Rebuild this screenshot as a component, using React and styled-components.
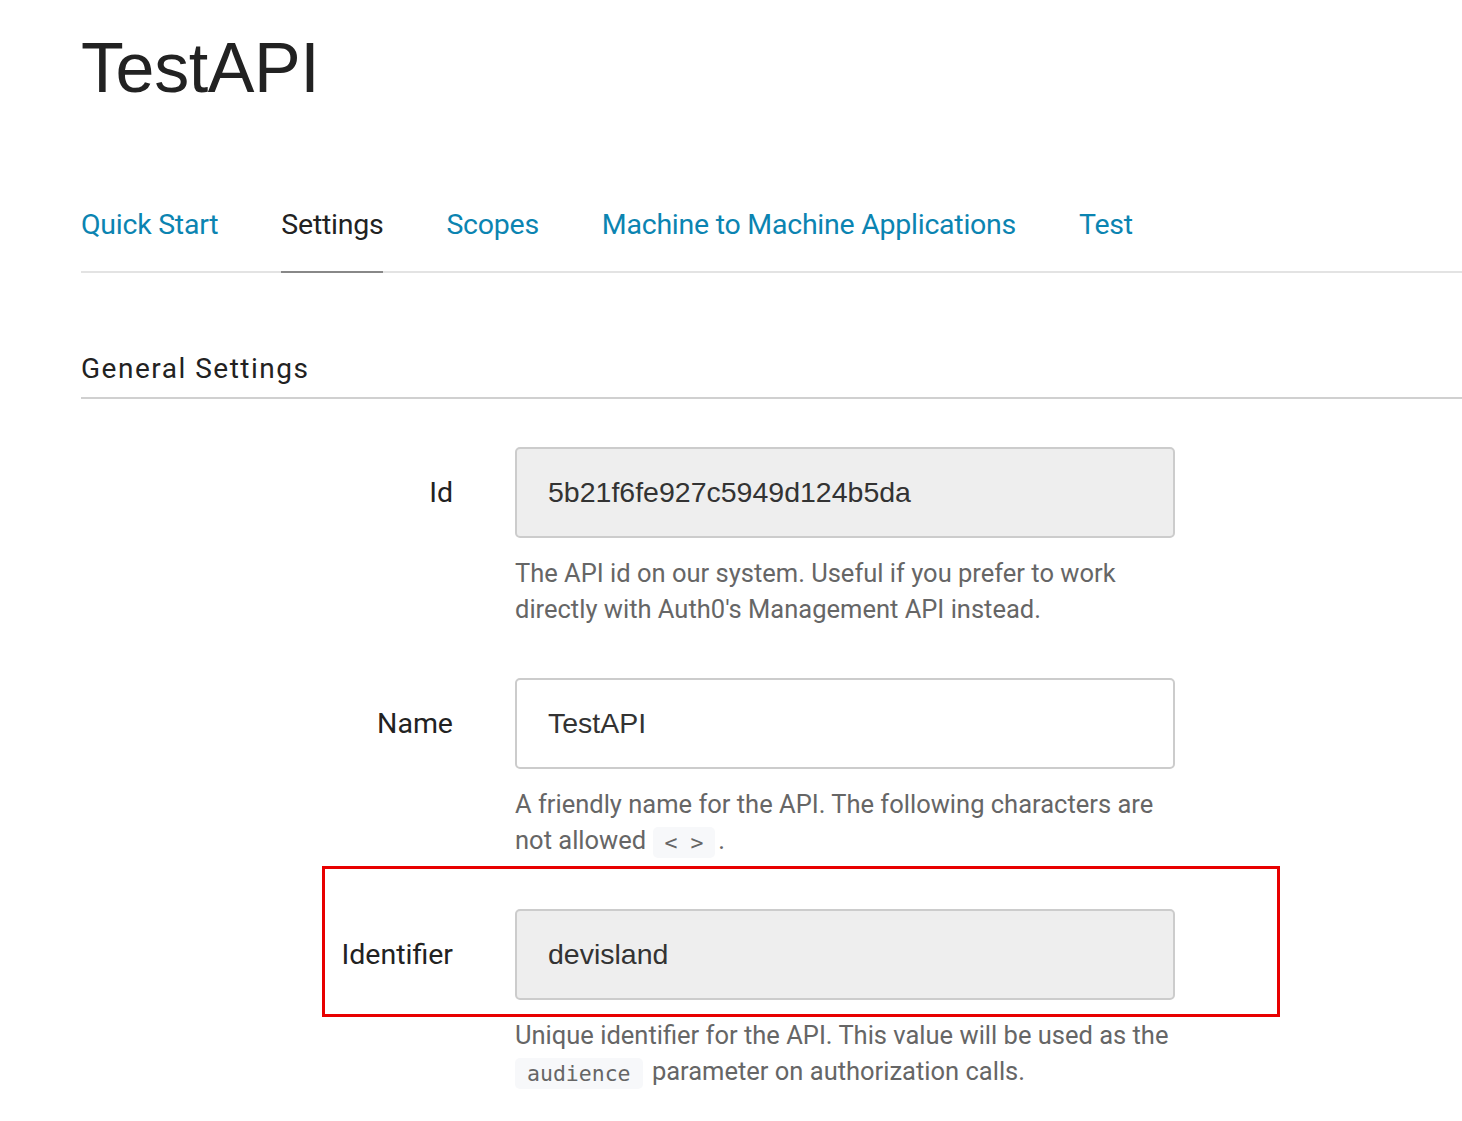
import React from 'react';
import styled, { createGlobalStyle } from 'styled-components';

const GlobalStyle = createGlobalStyle`
  body {
    margin: 0;
    background: #fff;
    font-family: Roboto, "Noto Sans", sans-serif;
  }
`;

const tabs = [
  { label: 'Quick Start' },
  { label: 'Settings', active: true },
  { label: 'Scopes' },
  { label: 'Machine to Machine Applications' },
  { label: 'Test' },
];

const App = () => {
  return (
    <>
      <GlobalStyle />
      <Page>
        <Title>TestAPI</Title>

        <Tabs>
          {tabs.map((t) => (
            <Tab key={t.label} $active={t.active}>
              {t.label}
            </Tab>
          ))}
        </Tabs>

        <SectionTitle>General Settings</SectionTitle>

        <Form>
          <Row>
            <Label>Id</Label>
            <Field>
              <Input $readOnly>5b21f6fe927c5949d124b5da</Input>
              <Help>
                The API id on our system. Useful if you prefer to work
                <br />
                directly with Auth0's Management API instead.
              </Help>
            </Field>
          </Row>

          <Row>
            <Label>Name</Label>
            <Field>
              <Input>TestAPI</Input>
              <Help>
                A friendly name for the API. The following characters are
                <br />
                not allowed <Code>&lt; &gt;</Code>.
              </Help>
            </Field>
          </Row>

          <Row>
            <Highlight />
            <Label>Identifier</Label>
            <Field>
              <Input $readOnly>devisland</Input>
              <Help>
                Unique identifier for the API. This value will be used as the
                <br />
                <Code>audience</Code> parameter on authorization calls.
              </Help>
            </Field>
          </Row>
        </Form>
      </Page>
    </>
  );
};

const Page = styled.div`
  padding: 33px 0 40px 81px;
`;

const Title = styled.h1`
  margin: 0;
  font-family: "Liberation Sans", Arial, sans-serif;
  font-weight: 400;
  font-size: 70px;
  line-height: 70px;
  letter-spacing: -0.4px;
  color: #222;
`;

const Tabs = styled.nav`
  display: flex;
  gap: 63px;
  margin-top: 108px;
  border-bottom: 2px solid #e3e3e3;
`;

const Tab = styled.a`
  display: block;
  padding-bottom: 32px;
  margin-bottom: -2px;
  font-size: 28.5px;
  line-height: 28px;
  letter-spacing: -0.25px;
  color: ${(p) => (p.$active ? '#222' : '#0b84b1')};
  border-bottom: 2px solid ${(p) => (p.$active ? '#888' : 'transparent')};
  cursor: pointer;
  white-space: nowrap;
`;

const SectionTitle = styled.h2`
  margin: 81px 0 0;
  padding-bottom: 13px;
  font-size: 28px;
  line-height: 30px;
  font-weight: 400;
  letter-spacing: 1.5px;
  color: #222;
  border-bottom: 2px solid #d0d0d0;
`;

const Form = styled.div`
  display: flex;
  flex-direction: column;
  gap: 51px;
  margin-top: 48px;
`;

const Row = styled.div`
  position: relative;
  display: grid;
  grid-template-columns: 372px 660px;
  column-gap: 62px;
`;

const Label = styled.label`
  height: 91px;
  display: flex;
  align-items: center;
  justify-content: flex-end;
  font-size: 28.5px;
  color: #222;
`;

const Field = styled.div`
  display: flex;
  flex-direction: column;
`;

const Input = styled.div`
  box-sizing: border-box;
  height: 91px;
  display: flex;
  align-items: center;
  padding: 0 31px;
  border: 2px solid #ccc;
  border-radius: 5px;
  background: ${(p) => (p.$readOnly ? '#eee' : '#fff')};
  font-family: "Liberation Sans", Arial, sans-serif;
  font-size: 28.5px;
  color: #333;
`;

const Help = styled.p`
  margin: 17px 0 0;
  font-size: 25.5px;
  line-height: 36px;
  color: #666;
`;

const Code = styled.code`
  display: inline-block;
  padding: 0 12px;
  margin-right: 3px;
  border-radius: 5px;
  background: #f7f8fa;
  font-family: "DejaVu Sans Mono", "Liberation Mono", monospace;
  font-size: 21.5px;
  line-height: 31px;
  color: #666;
  vertical-align: middle;
`;

const Highlight = styled.div`
  position: absolute;
  top: -43px;
  left: 241px;
  width: 958px;
  height: 151px;
  box-sizing: border-box;
  border: 3px solid #e80000;
  pointer-events: none;
`;

export default App;
